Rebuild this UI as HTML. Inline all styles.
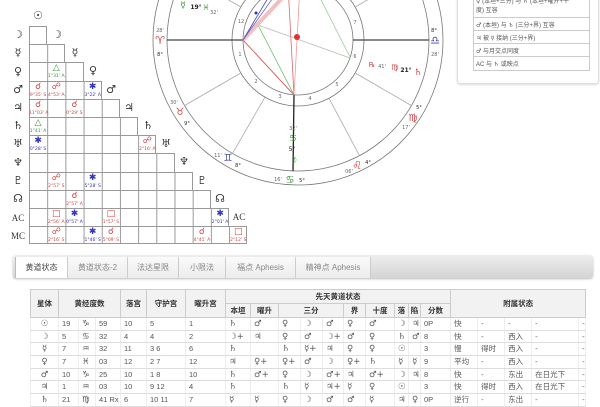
<!DOCTYPE html>
<html><head><meta charset="utf-8">
<style>
*{margin:0;padding:0;box-sizing:border-box}
body{width:600px;height:400px;background:#fff;position:relative;overflow:hidden;font-family:"Liberation Sans","Noto Sans CJK SC","DejaVu Sans",sans-serif;color:#444}
.sym{font-family:"DejaVu Sans","Liberation Sans",sans-serif}
.row{position:absolute;left:29px;height:18.2px;border-top:1px solid #999;border-right:1px solid #999;background-image:linear-gradient(to right,#999 1px,transparent 1px);background-size:18.2px 100%}
.lbl{position:absolute;font-family:"DejaVu Sans",sans-serif;font-size:11px;color:#333;width:16px;text-align:center;line-height:12px}
.asp{position:absolute;width:18.2px;height:18.2px;text-align:center;font-family:"DejaVu Sans",sans-serif}
.asp b{display:block;font-weight:normal;font-size:9px;line-height:11px;margin-top:1px}
.asp i{display:block;font-style:normal;font-size:4.5px;line-height:5px;white-space:nowrap}
.r{color:#c44}.g{color:#393}.bl{color:#33b}
.tabs{position:absolute;left:13px;top:255px;width:580px;height:23px;background:linear-gradient(#eee,#d4d4d4);border-radius:3px;box-shadow:0 1px 2px #bbb}
.tab{position:absolute;top:2px;height:21px;font-size:8px;line-height:21px;text-align:center;color:#888;border-right:1px solid #ccc;background:linear-gradient(#fafafa,#ececec)}
.tab.a{background:#fff;color:#444;border-left:1px solid #bbb}
table{position:absolute;left:30px;top:289px;border-collapse:collapse;table-layout:fixed;width:555px;font-size:7.5px;color:#555}
td,th{border:1px solid #ddd;height:12.7px;padding:0 0 0 3px;white-space:nowrap;overflow:hidden;text-align:left;font-weight:normal;line-height:10px}
th{background:#f2f2f2;color:#333;font-weight:bold;text-align:center;padding:0;border-color:#ccc;height:14px}
td.c{text-align:center;padding:0}
tr.d td{border-left-color:#eee;border-right-color:#eee}
.s{font-family:"DejaVu Sans",sans-serif;font-size:8.5px}
</style></head><body>

<div class="row" style="top:26px;width:18.2px"></div>
<div class="row" style="top:44.2px;width:36.4px"></div>
<div class="row" style="top:62.4px;width:54.6px"></div>
<div class="row" style="top:80.6px;width:72.8px"></div>
<div class="row" style="top:98.8px;width:91px"></div>
<div class="row" style="top:117px;width:109.2px"></div>
<div class="row" style="top:135.2px;width:127.4px"></div>
<div class="row" style="top:153.4px;width:145.6px"></div>
<div class="row" style="top:171.6px;width:163.8px"></div>
<div class="row" style="top:189.8px;width:182px"></div>
<div class="row" style="top:208px;width:200.2px"></div>
<div class="row" style="top:226.2px;width:218.4px;height:18.2px;border-bottom:1px solid #999"></div>

<div class="lbl" style="left:30px;top:10px">☉</div>
<div class="lbl" style="left:49px;top:29px">☽</div>
<div class="lbl" style="left:67px;top:47px">☿</div>
<div class="lbl" style="left:85px;top:65px">♀</div>
<div class="lbl" style="left:103px;top:84px">♂</div>
<div class="lbl" style="left:121px;top:102px">♃</div>
<div class="lbl" style="left:140px;top:120px">♄</div>
<div class="lbl" style="left:158px;top:138px">♅</div>
<div class="lbl" style="left:176px;top:156px">♆</div>
<div class="lbl" style="left:194px;top:175px">♇</div>
<div class="lbl" style="left:212px;top:193px">☊</div>
<div class="lbl" style="left:231px;top:211px;font-family:'Liberation Serif',serif;font-size:9px">AC</div>

<div class="lbl" style="left:10px;top:29px">☽</div>
<div class="lbl" style="left:10px;top:47px">☿</div>
<div class="lbl" style="left:10px;top:66px">♀</div>
<div class="lbl" style="left:10px;top:84px">♂</div>
<div class="lbl" style="left:10px;top:102px">♃</div>
<div class="lbl" style="left:10px;top:120px">♄</div>
<div class="lbl" style="left:10px;top:138px">♅</div>
<div class="lbl" style="left:10px;top:157px">♆</div>
<div class="lbl" style="left:10px;top:175px">♇</div>
<div class="lbl" style="left:10px;top:193px">☊</div>
<div class="lbl" style="left:10px;top:212px;font-family:'Liberation Serif',serif;font-size:9px">AC</div>
<div class="lbl" style="left:10px;top:230px;font-family:'Liberation Serif',serif;font-size:9px">MC</div>

<div class="asp g" style="left:47.2px;top:62.4px"><b>△</b><i>1°31' A</i></div>
<div class="asp r" style="left:29px;top:80.6px"><b>☌</b><i>9°35' S</i></div>
<div class="asp r" style="left:47.2px;top:80.6px"><b>☍</b><i>4°53' A</i></div>
<div class="asp bl" style="left:83.6px;top:80.6px"><b>✱</b><i>3°22' A</i></div>
<div class="asp r" style="left:29px;top:98.8px"><b>☌</b><i>11°03' A</i></div>
<div class="asp r" style="left:65.4px;top:98.8px"><b>☌</b><i>0°29' S</i></div>
<div class="asp g" style="left:29px;top:117px"><b>△</b><i>1°41' A</i></div>
<div class="asp bl" style="left:29px;top:135.2px"><b>✱</b><i>0°28' S</i></div>
<div class="asp r" style="left:138.2px;top:135.2px"><b>☍</b><i>2°16' A</i></div>
<div class="asp r" style="left:47.2px;top:171.6px"><b>☍</b><i>2°57' S</i></div>
<div class="asp bl" style="left:83.6px;top:171.6px"><b>✱</b><i>5°28' S</i></div>
<div class="asp r" style="left:65.4px;top:189.8px"><b>☌</b><i>2°57' A</i></div>
<div class="asp r" style="left:47.2px;top:208px"><b>□</b><i>2°56' A</i></div>
<div class="asp bl" style="left:65.4px;top:208px"><b>✱</b><i>0°57' A</i></div>
<div class="asp r" style="left:101.8px;top:208px"><b>□</b><i>1°57' S</i></div>
<div class="asp bl" style="left:211px;top:208px"><b>✱</b><i>2°01' A</i></div>
<div class="asp r" style="left:47.2px;top:226.2px"><b>☍</b><i>2°16' S</i></div>
<div class="asp bl" style="left:83.6px;top:226.2px"><b>✱</b><i>1°46' S</i></div>
<div class="asp r" style="left:101.8px;top:226.2px"><b>☌</b><i>5°09' S</i></div>
<div class="asp r" style="left:192.8px;top:226.2px"><b>☌</b><i>4°41' A</i></div>
<div class="asp r" style="left:229.2px;top:226.2px"><b>□</b><i>2°12' S</i></div>

<svg style="position:absolute;left:0;top:0" width="600" height="250" viewBox="0 0 600 250">
<g fill="none" stroke="#777" stroke-width="0.8">
<circle cx="298" cy="40" r="145"/><circle cx="298" cy="40" r="131"/>
<circle cx="298" cy="40" r="66"/><circle cx="298" cy="40" r="55"/>
<line x1="355.2" y1="73" x2="411.4" y2="105.5" stroke="#aaa"/>
<line x1="329" y1="98.3" x2="359.5" y2="155.7" stroke="#aaa"/>
<line x1="265" y1="97.2" x2="232.5" y2="153.4" stroke="#aaa"/>
<line x1="240.8" y1="73" x2="184.6" y2="105.5" stroke="#aaa"/>
<line x1="240.8" y1="7" x2="184.6" y2="-25.5" stroke="#aaa"/>
<line x1="265" y1="-17.2" x2="232.5" y2="-73" stroke="#aaa"/>
<line x1="331" y1="-17.2" x2="363.5" y2="-73" stroke="#aaa"/>
<line x1="355.2" y1="7" x2="411.4" y2="-25.5" stroke="#aaa"/>
<line x1="243" y1="40" x2="167" y2="40" stroke="#444" stroke-width="1.2"/>
<line x1="353" y1="40" x2="429" y2="40" stroke="#444" stroke-width="1.2"/>
<line x1="294" y1="95" x2="293" y2="171" stroke="#222" stroke-width="1.3"/>
<line x1="258" y1="25" x2="350" y2="58" stroke="#bbb"/>
<line x1="243" y1="40" x2="294" y2="95" stroke="#d66" stroke-width="1"/>
<line x1="288" y1="-15" x2="294" y2="95" stroke="#d66"/>
<line x1="300" y1="-15" x2="294" y2="95" stroke="#e99"/>
<line x1="258" y1="25" x2="294" y2="95" stroke="#6b6"/>
<line x1="315" y1="-12" x2="350" y2="57" stroke="#9c9"/>
<line x1="243" y1="40" x2="285" y2="-5" stroke="#f2c0c0" stroke-width="4"/>
<line x1="243" y1="40" x2="268" y2="-2" stroke="#44b"/>
<line x1="243" y1="40" x2="275" y2="-5" stroke="#66c"/>
</g>
<circle cx="297" cy="37" r="3" fill="#d33"/>
<circle cx="256" cy="13" r="1.5" fill="#33b"/>
<g font-family="DejaVu Sans,sans-serif" text-anchor="middle">
<text x="160" y="44" font-size="11" fill="#c44">♈</text>
<text x="160" y="32" font-size="5" fill="#666">28'</text>
<text x="160" y="56" font-size="5" fill="#222">8°</text>
<text x="435" y="44" font-size="11" fill="#44a">♎</text>
<text x="434" y="32" font-size="5" fill="#222">8°</text>
<text x="435" y="56" font-size="5" fill="#666">28'</text>
<text x="180" y="115" font-size="10" fill="#c44">♉</text>
<text x="174" y="104" font-size="5" fill="#666">30'</text>
<text x="187" y="125" font-size="5" fill="#222">9°</text>
<text x="228" y="161" font-size="10" fill="#44a">♊</text>
<text x="218" y="157" font-size="5" fill="#666">11'</text>
<text x="238" y="167" font-size="5" fill="#222">8°</text>
<text x="290" y="183" font-size="10" fill="#393">♋</text>
<text x="278" y="181" font-size="5" fill="#666">16'</text>
<text x="302" y="182" font-size="5" fill="#222">5°</text>
<text x="357" y="169" font-size="11" fill="#c44">♌</text>
<text x="349" y="173" font-size="5" fill="#666">06'</text>
<text x="368" y="164" font-size="5" fill="#222">4°</text>
<text x="413" y="121" font-size="10" fill="#c44">♍</text>
<text x="419" y="109" font-size="5" fill="#222">5°</text>
<text x="406" y="129" font-size="5" fill="#666">17'</text>
<text x="293" y="130" font-size="5" fill="#666">32'</text>
<text x="293" y="141" font-size="9" fill="#393">♋</text>
<text x="292" y="151" font-size="6" fill="#222">5°</text>
<text x="293" y="163" font-size="9" fill="#393">☽</text>
<text x="183" y="8" font-size="9" fill="#393">☿</text>
<text x="196" y="9" font-size="6" fill="#222" font-weight="bold">19°</text>
<text x="206" y="10" font-size="8" fill="#393">♓</text>
<text x="214" y="14" font-size="5" fill="#666">32'</text>
<text x="372" y="67" font-size="7" fill="#c44">℞</text>
<text x="382" y="68" font-size="5" fill="#666">41'</text>
<text x="395" y="70" font-size="8" fill="#c44">♍</text>
<text x="406" y="72" font-size="6" fill="#222" font-weight="bold">21°</text>
<text x="418" y="75" font-size="9" fill="#c44">♄</text>
<g font-size="5" fill="#666">
<text x="240" y="56">1</text><text x="256" y="83">2</text><text x="280" y="98">3</text>
<text x="310" y="100">4</text><text x="337" y="86">5</text><text x="355" y="58">6</text>
<text x="355" y="24">7</text><text x="241" y="23">12</text></g>
</g>
</svg>

<div style="position:absolute;left:457px;top:-4px;width:142px;height:88px;border:1px solid #ddd;border-radius:3px;box-shadow:0 1px 2px #ddd;background:#fff"></div>
<div style="position:absolute;left:473px;top:-5px;width:117px;font-size:6px;color:#555;border:1px solid #ccc;border-top:none">
<div style="height:23px;padding:2px;border-bottom:1px solid #ccc;line-height:9px"><span class="sym">♀</span> (本垣+三分) 与 <span class="sym">♄</span> (本垣+曜升+十<br>度) 互容</div>
<div style="height:13px;padding:2px;border-bottom:1px solid #ccc"><span class="sym">♂</span> (本垣) 与 <span class="sym">♄</span> (三分+界) 互容</div>
<div style="height:13px;padding:2px;border-bottom:1px solid #ccc"><span class="sym">♃</span> 被 <span class="sym">☿</span> 接纳 (三分+界)</div>
<div style="height:13px;padding:2px;border-bottom:1px solid #ccc"><span class="sym">♂</span> 与月交点同度</div>
<div style="height:13px;padding:2px">AC 与 <span class="sym">♄</span> 或映点</div>
</div>

<div class="tabs">
<div class="tab a" style="left:2px;width:53px">黄道状态</div>
<div class="tab" style="left:55px;width:60px">黄道状态-2</div>
<div class="tab" style="left:115px;width:51px">法达星限</div>
<div class="tab" style="left:166px;width:47px">小限法</div>
<div class="tab" style="left:213px;width:70px">福点 Aphesis</div>
<div class="tab" style="left:283px;width:75px">精神点 Aphesis</div>
</div>

<table>
<colgroup>
<col style="width:28px"><col style="width:20px"><col style="width:17px"><col style="width:25px">
<col style="width:26px"><col style="width:39px"><col style="width:40px">
<col style="width:25px"><col style="width:28px"><col style="width:22px"><col style="width:22px"><col style="width:21px">
<col style="width:22px"><col style="width:29px"><col style="width:14px"><col style="width:12px"><col style="width:30px">
<col style="width:27px"><col style="width:27px"><col style="width:27px"><col style="width:47px"><col style="width:7px">
</colgroup>
<tr><th rowspan="2">星体</th><th colspan="3" rowspan="2">黄经度数</th><th rowspan="2">落宫</th><th rowspan="2">守护宫</th><th rowspan="2">曜升宫</th><th colspan="10">先天黄道状态</th><th colspan="5" rowspan="2">附属状态</th></tr>
<tr><th>本垣</th><th>曜升</th><th colspan="3">三分</th><th>界</th><th>十度</th><th>落</th><th>陷</th><th>分数</th></tr>
<tr class="d"><td class="c s">☉</td><td>19</td><td class="s">♑</td><td>59</td><td>10</td><td>5</td><td>1</td><td class="s">♄</td><td class="s">♂</td><td class="s">♀</td><td class="s">☽</td><td class="s">♂</td><td class="s">♀</td><td class="s">♂</td><td class="s">☽</td><td class="s">♃</td><td>0P</td><td>快</td><td>-</td><td>-</td><td>-</td><td>-</td></tr>
<tr class="d"><td class="c s">☽</td><td>5</td><td class="s">♋</td><td>32</td><td>4</td><td>4</td><td>2</td><td class="s">☽+</td><td class="s">♃</td><td class="s">♀</td><td class="s">♂</td><td class="s">☽+</td><td class="s">♂</td><td class="s">♀</td><td class="s">♄</td><td class="s">♂</td><td>8</td><td>快</td><td>-</td><td>西入</td><td>-</td><td>-</td></tr>
<tr class="d"><td class="c s">☿</td><td>7</td><td class="s">♒</td><td>32</td><td>11</td><td>3 6</td><td>6</td><td class="s">♄</td><td></td><td class="s">♄</td><td class="s">☿+</td><td class="s">♃</td><td class="s">♀</td><td class="s">♀</td><td class="s">☉</td><td></td><td>3</td><td>慢</td><td>得时</td><td>西入</td><td>-</td><td>-</td></tr>
<tr class="d"><td class="c s">♀</td><td>7</td><td class="s">♓</td><td>03</td><td>12</td><td>2 7</td><td>12</td><td class="s">♃</td><td class="s">♀+</td><td class="s">♀+</td><td class="s">♂</td><td class="s">☽</td><td class="s">♀+</td><td class="s">♄</td><td class="s">☿</td><td class="s">☿</td><td>9</td><td>平均</td><td>-</td><td>西入</td><td>-</td><td>-</td></tr>
<tr class="d"><td class="c s">♂</td><td>10</td><td class="s">♑</td><td>25</td><td>10</td><td>1 8</td><td>10</td><td class="s">♄</td><td class="s">♂+</td><td class="s">♀</td><td class="s">☽</td><td class="s">♂+</td><td class="s">♃</td><td class="s">♂+</td><td class="s">☽</td><td class="s">♃</td><td>8</td><td>快</td><td>-</td><td>东出</td><td>在日光下</td><td>-</td></tr>
<tr class="d"><td class="c s">♃</td><td>1</td><td class="s">♒</td><td>03</td><td>10</td><td>9 12</td><td>4</td><td class="s">♄</td><td></td><td class="s">♄</td><td class="s">☿</td><td class="s">♃+</td><td class="s">☿</td><td class="s">♀</td><td class="s">☉</td><td></td><td>3</td><td>快</td><td>得时</td><td>西入</td><td>在日光下</td><td>-</td></tr>
<tr class="d"><td class="c s">♄</td><td>21</td><td class="s">♍</td><td>41 Rx</td><td>6</td><td>10 11</td><td>7</td><td class="s">☿</td><td class="s">☿</td><td class="s">♀</td><td class="s">☽</td><td class="s">♂</td><td class="s">♂</td><td class="s">☿</td><td class="s">♃</td><td class="s">♀</td><td>0P</td><td>逆行</td><td>-</td><td>东出</td><td>-</td><td>-</td></tr>
</table>
</body></html>
